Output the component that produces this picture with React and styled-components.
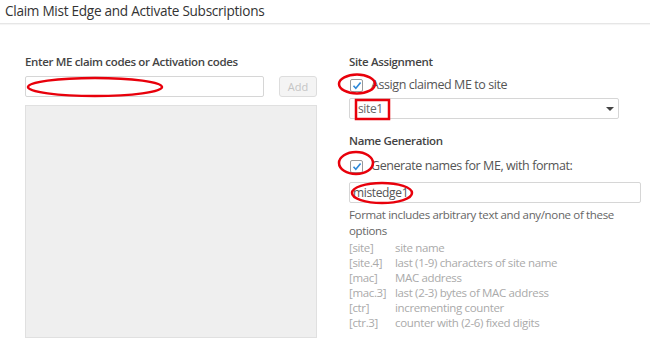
import React from "react"
import styled, { createGlobalStyle } from "styled-components"

const GlobalStyle = createGlobalStyle`
    html, body {
        margin: 0;
        padding: 0;
        background: #fff;
    }
    body {
        font-family: "Open Sans", "Liberation Sans", sans-serif;
        color: #555;
    }
`

const Page = styled.div`
    position: relative;
    width: 650px;
    height: 349px;
    overflow: hidden;
`

const Header = styled.div`
    height: 23px;
    display: flex;
    align-items: center;
    padding: 0 5px;
    border-bottom: 1px solid #e6e6e6;
    box-shadow: 0 1px 1px rgba(0, 0, 0, 0.04);
`

const Title = styled.h1`
    margin: 0;
    font-size: 13.6px;
    font-weight: 400;
    letter-spacing: -0.28px;
    color: #333;
    line-height: 23px;
    margin-top: -2px;
`

const Body = styled.div`
    display: grid;
    grid-template-columns: 292px 292px;
    column-gap: 32px;
    padding: 30px 0 0 25px;
`

const Column = styled.div`
    display: flex;
    flex-direction: column;
`

const SectionLabel = styled.div`
    font-size: 11.5px;
    font-weight: 600;
    letter-spacing: -0.35px;
    color: #444;
    line-height: 15px;
    margin-top: ${(p) => p.$top || 0}px;
`

const InputRow = styled.div`
    display: flex;
    justify-content: space-between;
    margin-top: 7px;
`

const TextInput = styled.div`
    box-sizing: border-box;
    width: ${(p) => p.$width}px;
    height: 21px;
    border: 1px solid #d6d6d6;
    border-radius: 2px;
    background: #fff;
    font-size: 12px;
    letter-spacing: -0.35px;
    line-height: 19px;
    color: #555;
    padding-left: 3px;
    margin-top: ${(p) => p.$top || 0}px;
`

const AddButton = styled.button`
    box-sizing: border-box;
    width: 38px;
    height: 21px;
    border: 1px solid #ddd;
    border-radius: 3px;
    background: #f4f4f4;
    color: #c4c4c4;
    font-family: inherit;
    font-size: 11px;
    padding: 0;
`

const CodeList = styled.div`
    box-sizing: border-box;
    height: 233px;
    margin-top: 8px;
    background: #efefef;
    border: 1px solid #e0e0e0;
`

const CheckRow = styled.label`
    display: flex;
    align-items: center;
    gap: 8px;
    margin-top: ${(p) => p.$top || 0}px;
    margin-left: 1px;
    font-size: 12.5px;
    letter-spacing: -0.42px;
    color: #555;
    line-height: 16px;
`

const Box = styled.span`
    box-sizing: border-box;
    width: 13px;
    height: 13px;
    border: 1px solid #999;
    border-radius: 2px;
    background: #fff;
    display: flex;
    align-items: center;
    justify-content: center;
`

const Select = styled.div`
    box-sizing: border-box;
    width: 270px;
    height: 21px;
    border: 1px solid #d6d6d6;
    border-radius: 2px;
    display: flex;
    align-items: center;
    justify-content: space-between;
    padding: 0 4px 0 8px;
    font-size: 12px;
    letter-spacing: -0.35px;
    color: #666;
    margin-top: 5px;
`

const Caret = styled.span`
    width: 0;
    height: 0;
    border-left: 4px solid transparent;
    border-right: 4px solid transparent;
    border-top: 4px solid #444;
`

const Help = styled.div`
    font-size: 11.5px;
    letter-spacing: -0.35px;
    color: #666;
    line-height: 16px;
    margin-top: 4px;
`

const Options = styled.div`
    display: grid;
    grid-template-columns: 46px auto;
    font-size: 11.5px;
    letter-spacing: -0.35px;
    line-height: 15px;
    color: #aaa;
    margin-top: 1px;
`

const Overlay = styled.svg`
    position: absolute;
    left: 0;
    top: 0;
    pointer-events: none;
`

const Check = () => (
    <Box>
        <svg width="10" height="9" viewBox="0 0 10 9">
            <path d="M1.5 4.8 L3.8 7.2 L8.6 1.4" fill="none" stroke="#2d88d8" strokeWidth="1.6" />
        </svg>
    </Box>
)

const options = [
    ["[site]", "site name"],
    ["[site.4]", "last (1-9) characters of site name"],
    ["[mac]", "MAC address"],
    ["[mac.3]", "last (2-3) bytes of MAC address"],
    ["[ctr]", "incrementing counter"],
    ["[ctr.3]", "counter with (2-6) fixed digits"],
]

export default function App() {
    return (
        <Page>
            <GlobalStyle />
            <Header>
                <Title>Claim Mist Edge and Activate Subscriptions</Title>
            </Header>
            <Body>
                <Column>
                    <SectionLabel>Enter ME claim codes or Activation codes</SectionLabel>
                    <InputRow>
                        <TextInput $width={239} />
                        <AddButton>Add</AddButton>
                    </InputRow>
                    <CodeList />
                </Column>
                <Column>
                    <SectionLabel>Site Assignment</SectionLabel>
                    <CheckRow $top={8}>
                        <Check />
                        Assign claimed ME to site
                    </CheckRow>
                    <Select>
                        site1
                        <Caret />
                    </Select>
                    <SectionLabel $top={14}>Name Generation</SectionLabel>
                    <CheckRow $top={10}>
                        <Check />
                        Generate names for ME, with format:
                    </CheckRow>
                    <TextInput $width={292} $top={8}>mistedge1</TextInput>
                    <Help>Format includes arbitrary text and any/none of these options</Help>
                    <Options>
                        {options.map(([k, v]) => (
                            <React.Fragment key={k}>
                                <span>{k}</span>
                                <span>{v}</span>
                            </React.Fragment>
                        ))}
                    </Options>
                </Column>
            </Body>
            <Overlay width="650" height="349">
                <g fill="none" stroke="#e8000b" strokeWidth="2.5">
                    <ellipse cx="95" cy="87" rx="67" ry="9" />
                    <ellipse cx="357" cy="84" rx="18" ry="9.5" />
                    <rect x="356" y="100" width="33" height="19" />
                    <ellipse cx="356" cy="163" rx="17" ry="11" />
                    <ellipse cx="382" cy="193" rx="30" ry="10" />
                </g>
            </Overlay>
        </Page>
    )
}
